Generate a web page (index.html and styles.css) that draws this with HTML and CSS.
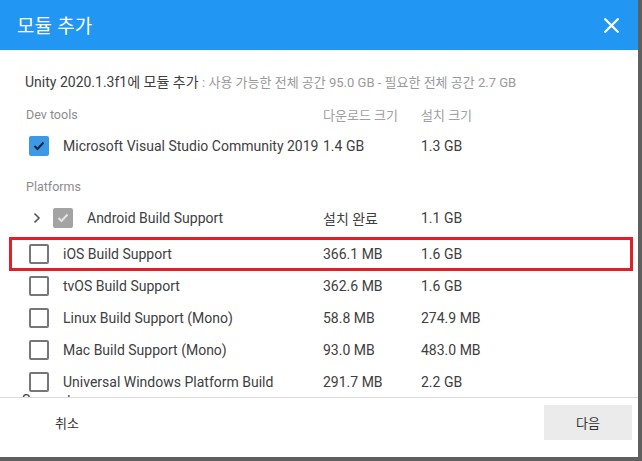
FILE: index.html
```html
<!DOCTYPE html>
<html lang="ko">
<head>
    <meta charset="UTF-8">
    <meta name="viewport" content="width=device-width, initial-scale=1.0">
    <title>모듈 추가</title>
    <link rel="stylesheet" href="styles.css">
</head>
<body>
    <div class="dialog">
        <header class="header">
            <h1>모듈 추가</h1>
            <svg class="close" width="15" height="15" viewBox="0 0 15 15">
                <path d="M1.2 1.2 L13.8 13.8 M13.8 1.2 L1.2 13.8" stroke="#fff" stroke-width="2.3" stroke-linecap="round"/>
            </svg>
        </header>

        <div class="content">
            <p class="subtitle">Unity 2020.1.3f1에 모듈 추가 <span class="space">: 사용 가능한 전체 공간 95.0 GB - 필요한 전체 공간 2.7 GB</span></p>

            <div class="section-head">
                <span class="name">Dev tools</span>
                <span class="dl">다운로드 크기</span>
                <span class="inst">설치 크기</span>
            </div>
            <div class="row">
                <span class="check checked">
                    <svg width="12" height="10" viewBox="0 0 12 10"><path d="M1.5 5 L4.5 8 L10.5 1.5" fill="none" stroke="#14233c" stroke-width="2"/></svg>
                </span>
                <span class="name">Microsoft Visual Studio Community 2019</span>
                <span class="dl">1.4 GB</span>
                <span class="inst">1.3 GB</span>
            </div>

            <div class="section-head platforms">
                <span class="name">Platforms</span>
            </div>
            <div class="row android">
                <svg class="chevron" width="8" height="12" viewBox="0 0 8 12"><path d="M1.5 1.5 L6 6 L1.5 10.5" fill="none" stroke="#555" stroke-width="1.6"/></svg>
                <span class="check installed">
                    <svg width="12" height="10" viewBox="0 0 12 10"><path d="M1.5 5 L4.5 8 L10.5 1.5" fill="none" stroke="#e4e4e4" stroke-width="2"/></svg>
                </span>
                <span class="name">Android Build Support</span>
                <span class="dl">설치 완료</span>
                <span class="inst">1.1 GB</span>
            </div>
            <div class="row highlight">
                <span class="check"></span>
                <span class="name">iOS Build Support</span>
                <span class="dl">366.1 MB</span>
                <span class="inst">1.6 GB</span>
            </div>
            <div class="row">
                <span class="check"></span>
                <span class="name">tvOS Build Support</span>
                <span class="dl">362.6 MB</span>
                <span class="inst">1.6 GB</span>
            </div>
            <div class="row">
                <span class="check"></span>
                <span class="name">Linux Build Support (Mono)</span>
                <span class="dl">58.8 MB</span>
                <span class="inst">274.9 MB</span>
            </div>
            <div class="row">
                <span class="check"></span>
                <span class="name">Mac Build Support (Mono)</span>
                <span class="dl">93.0 MB</span>
                <span class="inst">483.0 MB</span>
            </div>
            <div class="row wrap">
                <span class="check"></span>
                <span class="name">Universal Windows Platform Build Support</span>
                <span class="dl">291.7 MB</span>
                <span class="inst">2.2 GB</span>
            </div>
        </div>

        <footer class="footer">
            <span class="cancel">취소</span>
            <button class="next">다음</button>
        </footer>
    </div>
</body>
</html>
```

FILE: styles.css
```css
* {
    margin: 0;
    padding: 0;
    box-sizing: border-box;
}

body {
    font-family: Roboto, "Noto Sans CJK KR", sans-serif;
    background: #ffffff;
    color: #404040;
    width: 642px;
    height: 461px;
    overflow: hidden;
}

.dialog {
    width: 642px;
    height: 461px;
    display: flex;
    flex-direction: column;
    background: #ffffff;
    border-right: 4px solid #5f5f5f;
    border-bottom: 4px solid #5f5f5f;
}

.header {
    height: 50px;
    flex-shrink: 0;
    background: #2196f3;
    display: flex;
    align-items: center;
    justify-content: space-between;
    padding: 0 19px 0 17px;
}

.header h1 {
    font-family: "Noto Sans CJK KR", sans-serif;
    font-size: 19px;
    font-weight: 400;
    color: #ffffff;
    line-height: 24px;
}

.close {
    display: block;
}

.content {
    flex: 1;
    overflow: hidden;
}

.subtitle {
    margin: 24px 0 0 25px;
    font-size: 14px;
    line-height: 16px;
    color: #404040;
    white-space: nowrap;
}

.subtitle .space {
    font-size: 13px;
    color: #9a9a9a;
}

/* lignes de la liste */
.section-head,
.row {
    display: flex;
    align-items: center;
    margin-left: 10px;
    width: 622px;
    padding-left: 19px;
}

.section-head {
    height: 24px;
    margin-top: 11px;
    font-size: 12.5px;
    color: #8c8c8c;
}

.section-head .name {
    margin-left: -3px;
    width: 297px;
}

.section-head .dl {
    width: 98px;
    font-size: 13px;
    color: #a0a0a0;
}

.section-head .inst {
    font-size: 13px;
    color: #a0a0a0;
}

.section-head.platforms {
    margin-top: 12px;
}

.row {
    height: 32px;
    font-size: 14px;
    color: #404040;
}

.section-head + .row {
    margin-top: 4px;
}

.row .name {
    width: 260px;
    margin-left: 14px;
    white-space: nowrap;
}

.row .dl {
    width: 98px;
}

.check {
    width: 20px;
    height: 20px;
    flex-shrink: 0;
    border: 2px solid #777777;
    border-radius: 2px;
    display: flex;
    align-items: center;
    justify-content: center;
}

.check.checked {
    border: none;
    background: #3b99e6;
}

.check.installed {
    border: none;
    background: #a3a3a3;
}

.android {
    height: 36px;
    padding-left: 23px;
    padding-bottom: 4px;
}

.chevron {
    margin-right: 12px;
    flex-shrink: 0;
}

.android .name {
    width: 236px;
}

.highlight {
    outline: 3px solid #e21e26;
    outline-offset: -2px;
}

.wrap {
    align-items: flex-start;
    padding-top: 6px;
}

.wrap .name {
    white-space: normal;
    width: 301px;
    margin-left: -27px;
    text-indent: 41px;
    line-height: 18px;
    margin-top: 1px;
}

.wrap .dl,
.wrap .inst {
    line-height: 18px;
    margin-top: 1px;
}

.footer {
    height: 60px;
    flex-shrink: 0;
    border-top: 1px solid #dcdcdc;
    display: flex;
    align-items: center;
    justify-content: space-between;
    padding: 0 6px 0 55px;
}

.cancel {
    font-family: "Noto Sans CJK KR", sans-serif;
    font-size: 13px;
    color: #333333;
    margin-top: -10px;
}

.next {
    font-family: "Noto Sans CJK KR", sans-serif;
    width: 88px;
    height: 35px;
    border: none;
    background: #ebebeb;
    font-size: 13px;
    color: #333333;
    margin-top: -10px;
}
```
